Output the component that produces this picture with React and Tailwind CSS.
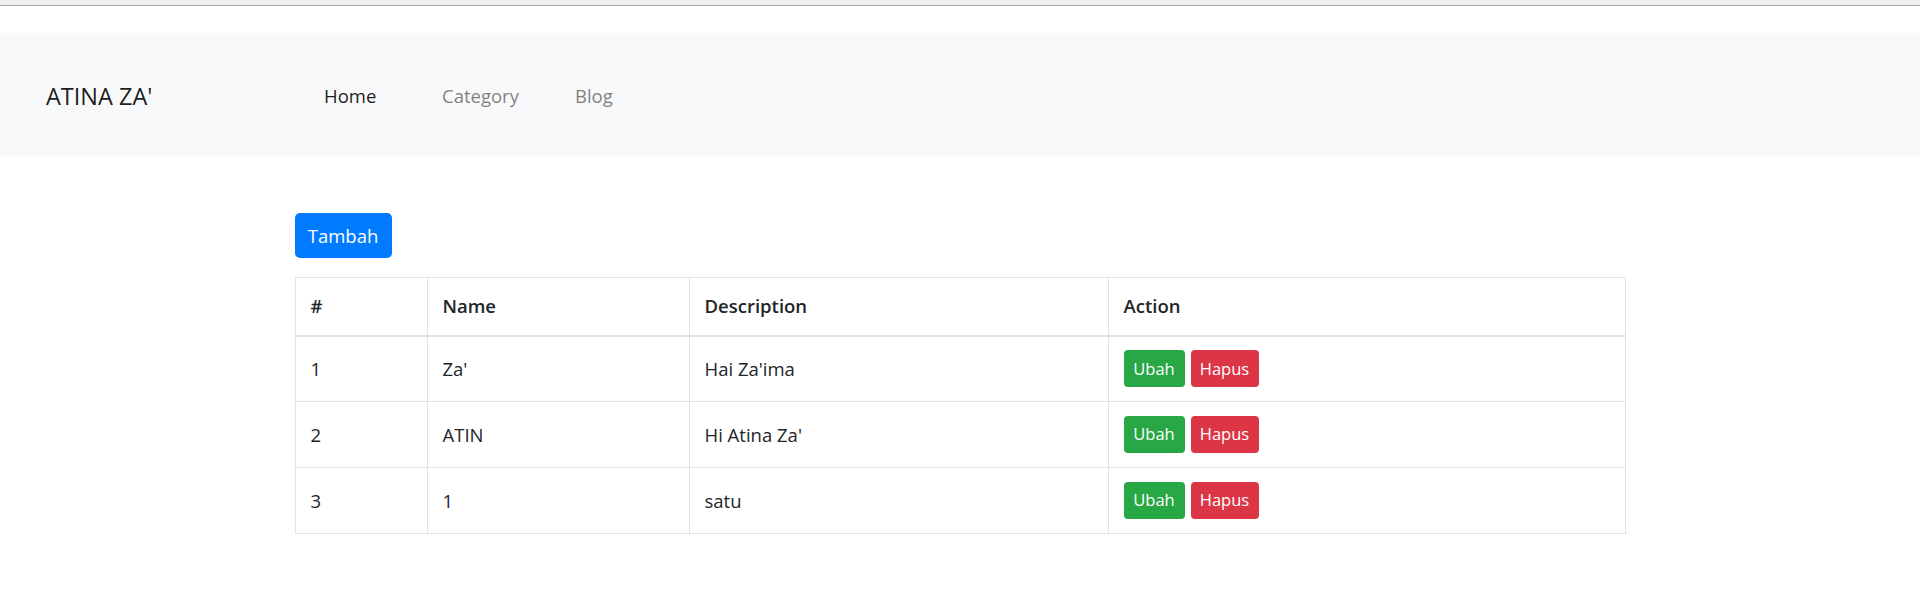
const rows = [
  { id: 1, name: "Za'", description: "Hai Za'ima" },
  { id: 2, name: 'ATIN', description: "Hi Atina Za'" },
  { id: 3, name: '1', description: 'satu' },
];

function Navbar() {
  return (
    <nav className="h-[123px] bg-[#f8f9fa] flex items-center pl-[46px] pt-[3px]">
      <a className="w-[278px] text-[23.5px] leading-[1.5] text-black/90 pt-[2px]">ATINA ZA'</a>
      <ul className="flex items-center text-[18.5px] leading-[1.5]">
        <li className="w-[118px] text-black/90">Home</li>
        <li className="w-[133px] text-black/50">Category</li>
        <li className="text-black/50">Blog</li>
      </ul>
    </nav>
  );
}

function ActionButtons() {
  return (
    <div className="flex gap-[6px]">
      <button className="w-[61px] h-[37px] rounded-[4px] bg-[#28a745] text-white text-[16.5px] leading-none">
        Ubah
      </button>
      <button className="w-[68px] h-[37px] rounded-[4px] bg-[#dc3545] text-white text-[16.5px] leading-none">
        Hapus
      </button>
    </div>
  );
}

export default function App() {
  return (
    <div className="min-h-[592px] bg-white text-[#212529] font-['Segoe_UI','Open_Sans',sans-serif]">
      {/* browser chrome edge */}
      <div className="h-[5px] bg-[#f1f1f1]" />
      <div className="h-px bg-[#a9a9a9]" />
      <div className="h-[27px]" />

      <Navbar />

      <main className="w-[1331px] mx-auto pt-[57px]">
        <button className="w-[97px] h-[45px] rounded-[5px] bg-[#007bff] text-white text-[18.5px] leading-none pt-[2px]">
          Tambah
        </button>

        <table className="mt-[19px] w-full table-fixed border-collapse border border-[#dee2e6] text-[18.5px]">
          <colgroup>
            <col className="w-[132px]" />
            <col className="w-[262px]" />
            <col className="w-[419px]" />
            <col />
          </colgroup>
          <thead>
            <tr className="h-[58px]">
              <th className="px-[15px] text-left font-semibold border border-[#dee2e6] border-b-2">#</th>
              <th className="px-[15px] text-left font-semibold border border-[#dee2e6] border-b-2">Name</th>
              <th className="px-[15px] text-left font-semibold border border-[#dee2e6] border-b-2">Description</th>
              <th className="px-[15px] text-left font-semibold border border-[#dee2e6] border-b-2">Action</th>
            </tr>
          </thead>
          <tbody>
            {rows.map((r) => (
              <tr key={r.id} className="h-[66px]">
                <td className="px-[15px] border border-[#dee2e6]">{r.id}</td>
                <td className="px-[15px] border border-[#dee2e6]">{r.name}</td>
                <td className="px-[15px] border border-[#dee2e6]">{r.description}</td>
                <td className="px-[15px] border border-[#dee2e6]">
                  <ActionButtons />
                </td>
              </tr>
            ))}
          </tbody>
        </table>
      </main>
    </div>
  );
}
